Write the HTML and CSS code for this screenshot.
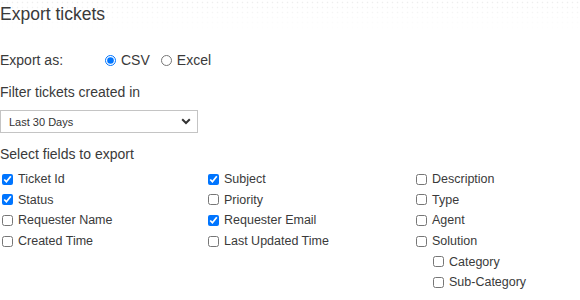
FILE: index.html
```html
<!DOCTYPE html>
<html lang="en">
<head>
<meta charset="utf-8">
<title>Export tickets</title>
<link rel="stylesheet" href="styles.css">
</head>
<body>
<div class="page">
  <header class="head">
    <h1 class="title">Export tickets</h1>
  </header>

  <div class="export-row">
    <span class="export-label">Export as:</span>
    <label class="radio"><input type="radio" name="fmt" checked> CSV</label>
    <label class="radio"><input type="radio" name="fmt"> Excel</label>
  </div>

  <div class="section-label filter-label">Filter tickets created in</div>
  <div class="select">
    <span>Last 30 Days</span>
    <svg class="chev" width="10" height="7" viewBox="0 0 10 7"><path d="M1.2 1.3 L5 5 L8.8 1.3" fill="none" stroke="#333" stroke-width="2"/></svg>
  </div>

  <div class="section-label fields-label">Select fields to export</div>
  <div class="fields">
    <div class="col col1">
      <label class="field"><input type="checkbox" checked><span>Ticket Id</span></label>
      <label class="field"><input type="checkbox" checked><span>Status</span></label>
      <label class="field"><input type="checkbox"><span>Requester Name</span></label>
      <label class="field"><input type="checkbox"><span>Created Time</span></label>
    </div>
    <div class="col col2">
      <label class="field"><input type="checkbox" checked><span>Subject</span></label>
      <label class="field"><input type="checkbox"><span>Priority</span></label>
      <label class="field"><input type="checkbox" checked><span>Requester Email</span></label>
      <label class="field"><input type="checkbox"><span>Last Updated Time</span></label>
    </div>
    <div class="col col3">
      <label class="field"><input type="checkbox"><span>Description</span></label>
      <label class="field"><input type="checkbox"><span>Type</span></label>
      <label class="field"><input type="checkbox"><span>Agent</span></label>
      <label class="field"><input type="checkbox"><span>Solution</span></label>
      <label class="field sub"><input type="checkbox"><span>Category</span></label>
      <label class="field sub"><input type="checkbox"><span>Sub-Category</span></label>
    </div>
  </div>
</div>
</body>
</html>
```

FILE: styles.css
```css
html, body {
  margin: 0;
  padding: 0;
  background: #fff;
}
body {
  font-family: "Liberation Sans", Arial, sans-serif;
  color: #3a3a3a;
}
.page {
  width: 580px;
}
.head {
  height: 36px;
  padding-top: 2px;
  box-sizing: border-box;
  background-image:
    linear-gradient(to bottom, rgba(255,255,255,0.35) 0%, rgba(255,255,255,0.85) 55%, #fff 90%),
    radial-gradient(circle, #e2e2e2 0.6px, transparent 1.1px);
  background-size: 100% 100%, 5px 5px;
}
.title {
  margin: 0;
  font-weight: normal;
  font-size: 17.5px;
  line-height: 24px;
  color: #3a3a3a;
}
.export-row {
  margin-top: 14px;
  display: flex;
  align-items: center;
  height: 20px;
  font-size: 14px;
  line-height: 20px;
}
.export-label {
  width: 105px;
}
.radio {
  display: flex;
  align-items: center;
  gap: 5px;
  margin-right: 11px;
}
.radio input {
  margin: 0;
  width: 11px;
  height: 11px;
}
.section-label {
  font-size: 14px;
  line-height: 20px;
}
.filter-label {
  margin-top: 12px;
}
.select {
  margin-top: 8px;
  width: 198px;
  height: 23px;
  box-sizing: border-box;
  border: 1px solid #c4c4c4;
  display: flex;
  align-items: center;
  justify-content: space-between;
  padding: 0 6px 0 8px;
  font-size: 11px;
  color: #333;
}
.chev {
  display: block;
}
.fields-label {
  margin-top: 11px;
}
.fields {
  margin-top: 5px;
  display: flex;
  padding-left: 2px;
}
.col1 { width: 206px; }
.col2 { width: 208px; }
.col3 { flex: 1; }
.field {
  display: flex;
  align-items: center;
  gap: 5px;
  height: 20.6px;
  font-size: 12.5px;
}
.field input {
  margin: 0;
  width: 11px;
  height: 11px;
}
.field.sub {
  padding-left: 17px;
}
```
